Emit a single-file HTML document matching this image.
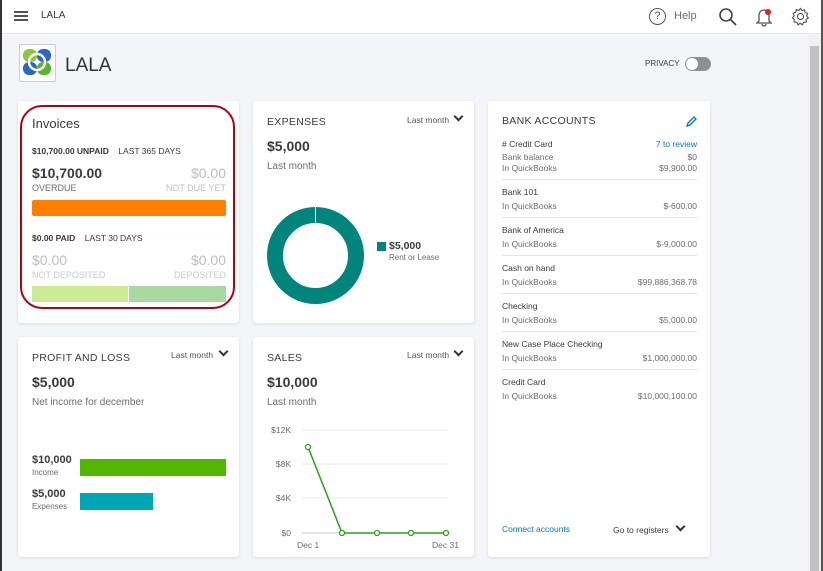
<!DOCTYPE html>
<html><head><meta charset="utf-8"><style>
*{margin:0;padding:0;box-sizing:border-box}
body{width:823px;height:571px;overflow:hidden;background:#f4f5f8;font-family:"Liberation Sans",sans-serif;color:#393a3d;position:relative}
.a{position:absolute;white-space:nowrap}
.card{position:absolute;background:#fff;border-radius:3px;box-shadow:0 1px 3px rgba(0,0,0,.12)}
.t{font-size:10.5px;letter-spacing:.3px;color:#393a3d}
.lm{font-size:8.5px;color:#555}
.chev{position:absolute;width:7px;height:7px;border-right:2px solid #333;border-bottom:2px solid #333;transform:rotate(45deg)}
.big{font-size:14px;font-weight:bold;color:#393a3d}
.s{font-size:8.5px;color:#6b6c72}
.row{position:absolute;left:14px;right:14px;border-top:1px solid #e3e5e8}
</style></head><body>
<div class="a" style="left:0;top:0;width:2px;height:571px;background:#333"></div>
<div class="a" style="left:821px;top:0;width:2px;height:571px;background:#555"></div>
<div class="a" style="left:2px;top:0;width:819px;height:34px;background:#fff;border-bottom:1px solid #e6e6e6"></div>
<div class="a" style="left:14px;top:11px;width:14px;height:2px;background:#555;box-shadow:0 4px 0 #555,0 8px 0 #555"></div>
<div class="a" style="left:41px;top:10px;font-size:10px">LALA</div>
<div class="a" style="left:649px;top:8px;width:17px;height:17px;border:1.5px solid #555;border-radius:50%;font-size:11px;text-align:center;line-height:14px;color:#555">?</div>
<div class="a" style="left:674px;top:10px;font-size:11px;color:#6b6c72">Help</div>
<svg class="a" style="left:718px;top:7px" width="20" height="20"><circle cx="8" cy="8" r="6" fill="none" stroke="#444" stroke-width="1.6"/><line x1="12.5" y1="12.5" x2="18" y2="18" stroke="#444" stroke-width="1.8"/></svg>
<svg class="a" style="left:755px;top:7px" width="18" height="20"><path d="M4 14 V8 a5 5 0 0 1 10 0 V14 L16 16 H2 Z M7 17 a2 2 0 0 0 4 0" fill="none" stroke="#555" stroke-width="1.3"/><circle cx="13" cy="5" r="3" fill="#e02020"/></svg>
<svg class="a" style="left:791px;top:7px" width="19" height="19" viewBox="0 0 20 20"><path d="M10 1.5l1.6 2.3 2.7-.8.5 2.8 2.7 1-1 2.6 1.8 2.2-2.4 1.5.2 2.8-2.8.2-1.2 2.6-2.4-1.5-2.4 1.5-1.2-2.6-2.8-.2.2-2.8L1.5 11.4l1.8-2.2-1-2.6 2.7-1 .5-2.8 2.7.8z" fill="none" stroke="#555" stroke-width="1.2"/><circle cx="10" cy="10" r="3.2" fill="none" stroke="#555" stroke-width="1.2"/></svg>
<div class="a" style="left:808px;top:35px;width:13px;height:536px;background:#f0f0f0"></div>
<div class="a" style="left:810px;top:46px;width:9px;height:525px;background:#c1c1c1"></div>
<div class="a" style="left:19px;top:44px;width:37px;height:38px;background:#fff;border:1px solid #ccc;border-radius:2px"></div>
<svg class="a" style="left:22px;top:47px" width="31" height="31"><rect x="1" y="2" width="14" height="13" rx="6" fill="#8cc63f"/><rect x="15" y="2" width="14" height="13" rx="6" fill="#2b67c8"/><rect x="1" y="15" width="14" height="13" rx="6" fill="#2b67c8"/><rect x="15" y="15" width="14" height="13" rx="6" fill="#5ab52b"/><circle cx="15" cy="15" r="8" fill="none" stroke="#fff" stroke-width="2.5"/></svg>
<div class="a" style="left:65px;top:55px;font-size:19px;color:#333">LALA</div>
<div class="a" style="left:645px;top:59px;font-size:8px;color:#393a3d">PRIVACY</div>
<div class="a" style="left:685px;top:57px;width:26px;height:14px;border-radius:7px;background:#8d9096"></div>
<div class="a" style="left:686px;top:58px;width:12px;height:12px;border-radius:50%;background:#fff"></div>

<!-- Invoices -->
<div class="card" style="left:18px;top:101px;width:221px;height:222px"></div>
<div class="a" style="left:20px;top:105px;width:215px;height:204px;border:2.5px solid #b2000e;border-radius:22px"></div>
<div class="a" style="left:32px;top:116px;font-size:13px;color:#393a3d">Invoices</div>
<div class="a" style="left:32px;top:146px;font-size:8.5px"><b>$10,700.00 UNPAID</b>&nbsp;&nbsp;&nbsp;&nbsp;LAST 365 DAYS</div>
<div class="a" style="left:32px;top:165px;font-size:14px;font-weight:bold">$10,700.00</div>
<div class="a" style="left:32px;top:183px;font-size:9px;color:#6b6c72">OVERDUE</div>
<div class="a" style="right:597px;top:165px;font-size:14px;color:#babec5">$0.00</div>
<div class="a" style="right:597px;top:183px;font-size:9px;color:#babec5">NOT DUE YET</div>
<div class="a" style="left:32px;top:200px;width:194px;height:16px;background:#ff8000;border-radius:2px"></div>
<div class="a" style="left:32px;top:233px;font-size:8.5px"><b>$0.00 PAID</b>&nbsp;&nbsp;&nbsp;&nbsp;LAST 30 DAYS</div>
<div class="a" style="left:32px;top:252px;font-size:14px;color:#babec5">$0.00</div>
<div class="a" style="left:32px;top:270px;font-size:9px;color:#c8cbd0">NOT DEPOSITED</div>
<div class="a" style="right:597px;top:252px;font-size:14px;color:#babec5">$0.00</div>
<div class="a" style="right:597px;top:270px;font-size:9px;color:#c8cbd0">DEPOSITED</div>
<div class="a" style="left:32px;top:286px;width:96px;height:16px;background:#cdeb94"></div>
<div class="a" style="left:129px;top:286px;width:97px;height:16px;background:#a9d9a2"></div>

<!-- Expenses -->
<div class="card" style="left:253px;top:101px;width:221px;height:222px"></div>
<div class="a t" style="left:267px;top:116px">EXPENSES</div>
<div class="a lm" style="left:407px;top:115px">Last month</div>
<div class="chev" style="left:455px;top:113px"></div>
<div class="a big" style="left:267px;top:138px">$5,000</div>
<div class="a" style="left:267px;top:161px;font-size:10px;color:#6b6c72">Last month</div>
<div class="a" style="left:267px;top:207px;width:97px;height:97px;border-radius:50%;border:16px solid #00857c"></div>
<div class="a" style="left:315px;top:207px;width:1px;height:16px;background:#fff"></div>
<div class="a" style="left:377px;top:242px;width:9px;height:9px;background:#00857c"></div>
<div class="a" style="left:389px;top:240px;font-size:10.5px;font-weight:bold">$5,000</div>
<div class="a" style="left:389px;top:253px;font-size:8px;color:#6b6c72">Rent or Lease</div>

<!-- Bank -->
<div class="card" style="left:488px;top:101px;width:222px;height:456px"></div>
<div class="a t" style="left:502px;top:115px">BANK ACCOUNTS</div>
<svg class="a" style="left:686px;top:116px" width="11" height="11"><path d="M1 10 L2 7 L8 1 L10 3 L4 9 Z" fill="none" stroke="#0077c5" stroke-width="1.3"/></svg>
<div class="a" style="left:502px;top:139px;font-size:8.5px"># Credit Card</div>
<div class="a" style="right:126px;top:139px;font-size:8.5px;color:#0077c5">7 to review</div>
<div class="a s" style="left:502px;top:152px;line-height:11px">Bank balance<br>In QuickBooks</div>
<div class="a s" style="right:126px;top:152px;line-height:11px;text-align:right">$0<br>$9,900.00</div>
<div class="row" style="left:502px;right:126px;top:179px"></div>
<div class="a" style="left:502px;top:187px;font-size:8.5px">Bank 101</div>
<div class="a s" style="left:502px;top:201px">In QuickBooks</div><div class="a s" style="right:126px;top:201px">$-600.00</div>
<div class="row" style="left:502px;right:126px;top:217px"></div>
<div class="a" style="left:502px;top:225px;font-size:8.5px">Bank of America</div>
<div class="a s" style="left:502px;top:239px">In QuickBooks</div><div class="a s" style="right:126px;top:239px">$-9,000.00</div>
<div class="row" style="left:502px;right:126px;top:255px"></div>
<div class="a" style="left:502px;top:263px;font-size:8.5px">Cash on hand</div>
<div class="a s" style="left:502px;top:277px">In QuickBooks</div><div class="a s" style="right:126px;top:277px">$99,886,368.78</div>
<div class="row" style="left:502px;right:126px;top:293px"></div>
<div class="a" style="left:502px;top:301px;font-size:8.5px">Checking</div>
<div class="a s" style="left:502px;top:315px">In QuickBooks</div><div class="a s" style="right:126px;top:315px">$5,000.00</div>
<div class="row" style="left:502px;right:126px;top:331px"></div>
<div class="a" style="left:502px;top:339px;font-size:8.5px">New Case Place Checking</div>
<div class="a s" style="left:502px;top:353px">In QuickBooks</div><div class="a s" style="right:126px;top:353px">$1,000,000.00</div>
<div class="row" style="left:502px;right:126px;top:369px"></div>
<div class="a" style="left:502px;top:377px;font-size:8.5px">Credit Card</div>
<div class="a s" style="left:502px;top:391px">In QuickBooks</div><div class="a s" style="right:126px;top:391px">$10,000,100.00</div>
<div class="a" style="left:502px;top:524px;font-size:8.5px;color:#0077c5">Connect accounts</div>
<div class="a" style="left:613px;top:525px;font-size:8.5px;color:#393a3d">Go to registers</div>
<div class="chev" style="left:677px;top:523px"></div>

<!-- P&L -->
<div class="card" style="left:18px;top:337px;width:221px;height:220px"></div>
<div class="a t" style="left:32px;top:352px">PROFIT AND LOSS</div>
<div class="a lm" style="left:171px;top:350px">Last month</div>
<div class="chev" style="left:220px;top:348px"></div>
<div class="a big" style="left:32px;top:374px">$5,000</div>
<div class="a" style="left:32px;top:397px;font-size:10px;color:#6b6c72">Net income for december</div>
<div class="a" style="left:32px;top:454px;font-size:11px;font-weight:bold">$10,000</div>
<div class="a" style="left:32px;top:468px;font-size:8px;color:#6b6c72">Income</div>
<div class="a" style="left:80px;top:459px;width:146px;height:17px;background:#53b700"></div>
<div class="a" style="left:32px;top:488px;font-size:11px;font-weight:bold">$5,000</div>
<div class="a" style="left:32px;top:502px;font-size:8px;color:#6b6c72">Expenses</div>
<div class="a" style="left:80px;top:493px;width:73px;height:17px;background:#00a6b4"></div>

<!-- Sales -->
<div class="card" style="left:253px;top:337px;width:221px;height:220px"></div>
<div class="a t" style="left:267px;top:352px">SALES</div>
<div class="a lm" style="left:407px;top:350px">Last month</div>
<div class="chev" style="left:455px;top:348px"></div>
<div class="a big" style="left:267px;top:374px">$10,000</div>
<div class="a" style="left:267px;top:397px;font-size:10px;color:#6b6c72">Last month</div>
<svg class="a" style="left:253px;top:420px" width="221" height="135">
<g stroke="#e8e9eb" stroke-width="1"><line x1="49" y1="10" x2="195" y2="10"/><line x1="49" y1="44" x2="195" y2="44"/><line x1="49" y1="78" x2="195" y2="78"/><line x1="49" y1="113" x2="195" y2="113" stroke="#ccc"/></g>
<g font-family="Liberation Sans" font-size="8.5" fill="#6b6c72" text-anchor="end"><text x="38" y="13">$12K</text><text x="38" y="47">$8K</text><text x="38" y="81">$4K</text><text x="38" y="116">$0</text></g>
<g font-family="Liberation Sans" font-size="8.5" fill="#6b6c72"><text x="44" y="128">Dec 1</text><text x="179" y="128">Dec 31</text></g>
<polyline points="55,27 89,113 124,113 158,113 193,113" fill="none" stroke="#2ca01c" stroke-width="1.5"/>
<g fill="#fff" stroke="#2ca01c" stroke-width="1.3"><circle cx="55" cy="27" r="2.5"/><circle cx="89" cy="113" r="2.5"/><circle cx="124" cy="113" r="2.5"/><circle cx="158" cy="113" r="2.5"/><circle cx="193" cy="113" r="2.5"/></g>
</svg>
</body></html>
